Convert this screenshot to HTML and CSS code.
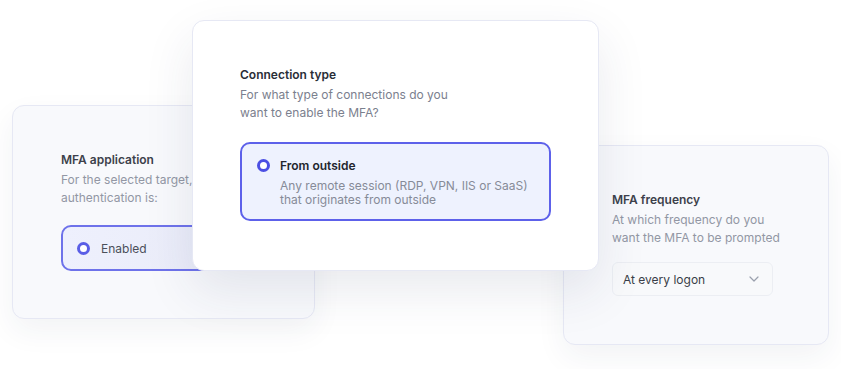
FILE: index.html
```html
<!DOCTYPE html>
<html>
<head>
<meta charset="utf-8">
<link rel="stylesheet" href="styles.css">
</head>
<body>
<div class="canvas">
  <section class="card card-left">
    <h3 class="title">MFA application</h3>
    <p class="desc">For the selected target, the multi-factor<br>authentication is:</p>
    <div class="option option-small">
      <span class="radio"></span>
      <span class="option-label">Enabled</span>
    </div>
  </section>

  <section class="card card-right">
    <h3 class="title">MFA frequency</h3>
    <p class="desc">At which frequency do you<br>want the MFA to be prompted</p>
    <div class="select">
      <span class="select-value">At every logon</span>
      <svg class="chevron" width="10" height="6" viewBox="0 0 10 6"><path d="M1 1l4 4 4-4" fill="none" stroke="#9aa0ad" stroke-width="1.2" stroke-linecap="round" stroke-linejoin="round"/></svg>
    </div>
  </section>

  <section class="card card-center">
    <h3 class="title">Connection type</h3>
    <p class="desc">For what type of connections do you<br>want to enable the MFA?</p>
    <div class="option option-big">
      <span class="radio"></span>
      <div class="option-text">
        <span class="option-label strong">From outside</span>
        <span class="option-desc">Any remote session (RDP, VPN, IIS or SaaS)<br>that originates from outside</span>
      </div>
    </div>
  </section>
</div>
</body>
</html>
```

FILE: styles.css
```css
* { box-sizing: border-box; }
html, body { margin: 0; padding: 0; background: #ffffff; }
body {
  font-family: Inter, "Noto Sans", "Liberation Sans", sans-serif;
  width: 841px;
  height: 369px;
  overflow: hidden;
}
.canvas {
  position: relative;
  width: 841px;
  height: 369px;
}
.card {
  position: absolute;
  border: 1px solid #e6e8f4;
  border-radius: 12px;
  overflow: hidden;
}
.card-left {
  left: 12px; top: 105px; width: 303px; height: 214px;
  background: #f8f9fc;
  padding: 45px 0 0 48px;
  box-shadow: 0 12px 30px rgba(40, 48, 90, 0.06);
}
.card-right {
  left: 563px; top: 145px; width: 266px; height: 200px;
  background: #f8f9fc;
  padding: 45px 0 0 48px;
  box-shadow: 0 12px 30px rgba(40, 48, 90, 0.06);
}
.card-center {
  left: 192px; top: 20px; width: 407px; height: 251px;
  background: #ffffff;
  padding: 45px 0 0 47px;
  box-shadow: 0 20px 50px rgba(40, 48, 90, 0.10);
  overflow: visible;
}
.title {
  margin: 0;
  font-size: 12px;
  font-weight: 600;
  line-height: 17px;
  color: #2a2e37;
}
.card-left .title, .card-right .title { color: #3d414b; }
.desc {
  margin: 3px 0 0;
  font-size: 12px;
  line-height: 18px;
  color: #7b808e;
  white-space: nowrap;
}
.card-left .desc, .card-right .desc { color: #9297a4; }
.option {
  display: flex;
  border: 2px solid #5d61ea;
  background: #eef2fe;
  border-radius: 10px;
}
.option-small {
  margin-top: 18px;
  width: 200px;
  height: 46px;
  align-items: center;
  padding-left: 14px;
  border-color: #6e72ea;
  background: linear-gradient(90deg, #eef0fd 0%, #e9ebf7 100%);
}
.option-big {
  margin-top: 20px;
  width: 311px;
  height: 79px;
  padding: 13px 0 0 15px;
  align-items: flex-start;
}
.radio {
  flex: none;
  width: 13px;
  height: 13px;
  border-radius: 50%;
  border: 3.5px solid #4b4fe3;
  background: #ffffff;
}
.option-big .radio { margin-top: 2px; }
.option-small .radio { border-color: #5a5ee6; }
.option-text {
  display: flex;
  flex-direction: column;
  margin-left: 10px;
}
.option-label {
  font-size: 12px;
  line-height: 17px;
  color: #4b4f5a;
  margin-left: 11px;
}
.option-text .option-label { margin-left: 0; }
.strong { font-weight: 600; color: #22252d; }
.option-desc {
  margin-top: 5px;
  font-size: 12px;
  line-height: 14px;
  color: #868b98;
  white-space: nowrap;
}
.select {
  margin-top: 15px;
  width: 161px;
  height: 34px;
  border: 1px solid #eceef3;
  border-radius: 6px;
  background: #f8f9fb;
  display: flex;
  align-items: center;
  justify-content: space-between;
  padding: 0 13px 0 10px;
}
.select-value {
  font-size: 12px;
  color: #3a3e48;
}
.chevron { display: block; }
```
